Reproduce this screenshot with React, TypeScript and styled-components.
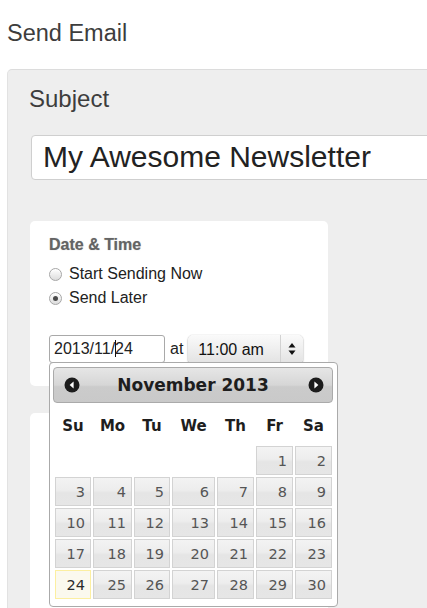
import React from "react";
import styled, { createGlobalStyle } from "styled-components";

const GlobalStyle = createGlobalStyle`
  html, body {
    margin: 0;
    padding: 0;
    background: #ffffff;
    overflow: hidden;
  }
  body {
    font-family: "Liberation Sans", Arial, Helvetica, sans-serif;
    color: #333;
  }
`;

const Page = styled.div`
  width: 427px;
  height: 608px;
  overflow: hidden;
  padding-top: 19px;
  box-sizing: border-box;
`;

const Title = styled.h1`
  margin: 0 0 22px 7px;
  font-size: 23.5px;
  line-height: 28px;
  font-weight: normal;
  color: #3d3d3d;
`;

const Panel = styled.section`
  margin-left: 7px;
  margin-right: -60px;
  height: 700px;
  background: #eeeeee;
  border-top: 1px solid #dcdcdc;
  border-left: 1px solid #e2e2e2;
  border-top-left-radius: 5px;
  padding: 15px 0 0 22px;
`;

const FieldLabel = styled.div`
  margin-left: -1px;
  font-size: 24px;
  line-height: 28px;
  color: #3d3d3d;
`;

const SubjectBox = styled.div`
  margin: 22px 0 0 1px;
  height: 43px;
  background: #fff;
  border: 1px solid #cfcfcf;
  border-radius: 4px;
  padding-left: 11px;
  font-size: 30px;
  line-height: 42px;
  color: #222;
  white-space: nowrap;
`;

const Card = styled.div<{ $top: number; $height: number }>`
  position: relative;
  margin-top: ${(p) => p.$top}px;
  width: 298px;
  height: ${(p) => p.$height}px;
  box-sizing: border-box;
  background: #fff;
  border-radius: 5px;
  padding: 15px 0 0 19px;
`;

const CardTitle = styled.div`
  font-size: 16px;
  line-height: 18px;
  font-weight: bold;
  color: #646464;
  text-shadow: 0 0 1px rgba(120, 120, 120, 0.6);
`;

const RadioList = styled.div`
  margin-top: 8px;
  display: flex;
  flex-direction: column;
`;

const RadioRow = styled.label`
  display: flex;
  align-items: center;
  gap: 7px;
  height: 24px;
  font-size: 16px;
  color: #222;
`;

const RadioDot = styled.span<{ $checked?: boolean }>`
  position: relative;
  width: 13px;
  height: 13px;
  box-sizing: border-box;
  border-radius: 50%;
  border: 1px solid #a6a6a6;
  background: linear-gradient(#ffffff, #dcdcdc);
  box-shadow: inset 0 1px 1px rgba(255, 255, 255, 0.8);
  &::after {
    content: "";
    display: ${(p) => (p.$checked ? "block" : "none")};
    position: absolute;
    left: 3px;
    top: 3px;
    width: 5px;
    height: 5px;
    border-radius: 50%;
    background: #4a4a4a;
  }
`;

const DateRow = styled.div`
  margin-top: 25px;
  display: flex;
  align-items: center;
  height: 28px;
`;

const DateField = styled.div`
  position: relative;
  width: 116px;
  height: 28px;
  box-sizing: border-box;
  border: 1px solid #a9a9a9;
  border-radius: 3px;
  background: #fff;
  padding-left: 4px;
  font-size: 16px;
  line-height: 26px;
  color: #222;
`;

const Caret = styled.span`
  display: inline-block;
  width: 1px;
  height: 17px;
  background: #111;
  vertical-align: -3px;
  margin: 0 -1px 0 0;
`;

const AtText = styled.span`
  margin: 0 5px 0 5px;
  font-size: 16px;
  color: #222;
`;

const SelectBox = styled.div`
  width: 115px;
  height: 29px;
  box-sizing: border-box;
  display: flex;
  border-radius: 5px;
  background: linear-gradient(#fafafa, #ececec 60%, #e2e2e2);
  box-shadow: 0 1px 2px rgba(0, 0, 0, 0.35), 0 0 1px rgba(0, 0, 0, 0.25);
  font-size: 16px;
  color: #111;
`;

const SelectValue = styled.div`
  flex: 1;
  padding-left: 10px;
  line-height: 29px;
  border-right: 1px solid #d2d2d2;
`;

const SelectArrows = styled.div`
  width: 22px;
  display: flex;
  align-items: center;
  justify-content: center;
`;

const Popup = styled.div`
  position: absolute;
  left: -1px;
  top: 100%;
  z-index: 10;
  width: 289px;
  height: 245px;
  box-sizing: border-box;
  border: 1px solid #aaaaaa;
  border-radius: 4px;
  background: #fff;
  padding: 4px 4px 0 3px;
  font-family: "DejaVu Sans", Verdana, sans-serif;
`;

const CalHeader = styled.div`
  height: 36px;
  box-sizing: border-box;
  border: 1px solid #aaaaaa;
  border-radius: 4px;
  background: linear-gradient(#e6e6e6, #d6d6d6 50%, #cbcbcb 55%, #c9c9c9);
  display: flex;
  align-items: center;
  justify-content: space-between;
  padding: 0 8px 0 10px;
`;

const CalTitle = styled.div`
  font-size: 17px;
  font-weight: bold;
  color: #1e1e1e;
  margin-right: 2px;
`;

const NavIcon = styled.svg`
  width: 16px;
  height: 16px;
  display: block;
`;

const CalGrid = styled.div`
  display: grid;
  grid-template-columns: 36px 39px 36px 43px 37px 37px 37px;
  grid-template-rows: 41px;
  grid-auto-rows: 29px;
  column-gap: 2px;
  row-gap: 2px;
  padding-left: 2px;
`;

const DayHead = styled.div`
  display: flex;
  align-items: center;
  justify-content: center;
  padding-top: 5px;
  font-size: 15px;
  font-weight: bold;
  color: #1e1e1e;
`;

const DayCell = styled.div<{ $today?: boolean }>`
  box-sizing: border-box;
  border: 1px solid ${(p) => (p.$today ? "#fcefa1" : "#d3d3d3")};
  background: ${(p) =>
    p.$today
      ? "#fbf9ee"
      : "linear-gradient(#f3f3f3, #ededed 45%, #e5e5e5 55%, #e6e6e6)"};
  color: ${(p) => (p.$today ? "#2a2a2a" : "#555555")};
  font-size: 14.5px;
  line-height: 28px;
  text-align: right;
  padding-right: 5px;
`;

const Empty = styled.div``;

const heads = ["Su", "Mo", "Tu", "We", "Th", "Fr", "Sa"];

const PrevIcon = () => (
  <NavIcon viewBox="0 0 16 16">
    <circle cx="8" cy="8" r="7.5" fill="#1c1c1c" />
    <path d="M9.6 4.6 L5.6 8 L9.6 11.4 Z" fill="#fff" />
  </NavIcon>
);

const NextIcon = () => (
  <NavIcon viewBox="0 0 16 16">
    <circle cx="8" cy="8" r="7.5" fill="#1c1c1c" />
    <path d="M6.4 4.6 L10.4 8 L6.4 11.4 Z" fill="#fff" />
  </NavIcon>
);

const Arrows = () => (
  <svg width="8" height="14" viewBox="0 0 8 14">
    <path d="M4 1 L7.5 5.5 L0.5 5.5 Z" fill="#111" />
    <path d="M4 13 L7.5 8.5 L0.5 8.5 Z" fill="#111" />
  </svg>
);

export default function App() {
  const cells: React.ReactNode[] = [];
  for (let i = 0; i < 5; i++) cells.push(<Empty key={`e${i}`} />);
  for (let d = 1; d <= 30; d++)
    cells.push(
      <DayCell key={d} $today={d === 24}>
        {d}
      </DayCell>
    );

  return (
    <Page>
      <GlobalStyle />
      <Title>Send Email</Title>
      <Panel>
        <FieldLabel>Subject</FieldLabel>
        <SubjectBox>My Awesome Newsletter</SubjectBox>
        <Card $top={41} $height={165}>
          <CardTitle>Date &amp; Time</CardTitle>
          <RadioList>
            <RadioRow>
              <RadioDot />
              Start Sending Now
            </RadioRow>
            <RadioRow>
              <RadioDot $checked />
              Send Later
            </RadioRow>
          </RadioList>
          <DateRow>
            <DateField>
              2013/11/
              <Caret />
              24
              <Popup>
                <CalHeader>
                  <PrevIcon />
                  <CalTitle>November 2013</CalTitle>
                  <NextIcon />
                </CalHeader>
                <CalGrid>
                  {heads.map((h) => (
                    <DayHead key={h}>{h}</DayHead>
                  ))}
                  {cells}
                </CalGrid>
              </Popup>
            </DateField>
            <AtText>at</AtText>
            <SelectBox>
              <SelectValue>11:00 am</SelectValue>
              <SelectArrows>
                <Arrows />
              </SelectArrows>
            </SelectBox>
          </DateRow>
        </Card>
        <Card $top={27} $height={300} />
      </Panel>
    </Page>
  );
}
